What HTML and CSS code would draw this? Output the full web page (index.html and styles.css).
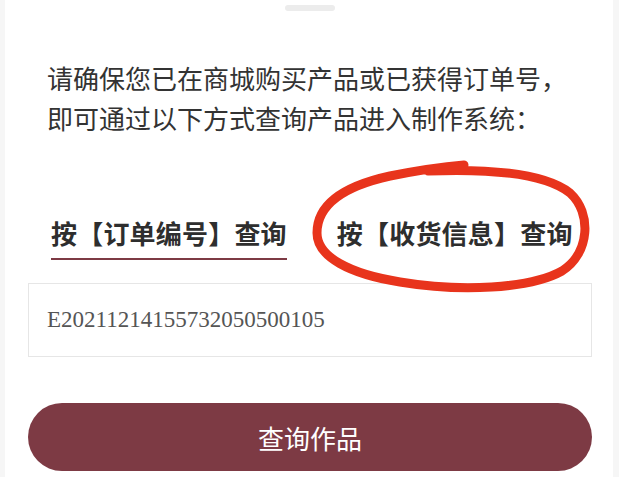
FILE: index.html
```html
<!DOCTYPE html>
<html lang="zh-CN">
<head>
  <meta charset="UTF-8" />
  <title>查询作品</title>
  <link rel="stylesheet" href="styles.css">
</head>
<body>

<div class="sheet">
  <div class="handle"></div>

  <p class="intro">请确保您已在商城购买产品或已获得订单号，<br>即可通过以下方式查询产品进入制作系统：</p>

  <div class="tabs">
    <div class="tab active">按【订单编号】查询</div>
    <div class="tab">按【收货信息】查询</div>
    <!-- red hand-drawn mark over the second tab -->
    <svg class="mark" width="284" height="136" viewBox="0 0 284 136">
      <path d="M118,12 C170,10 232,12 260,34 C282,54 280,94 252,112 C220,130 150,133 90,123 C40,115 7,98 7,74 C7,48 30,28 80,17 C105,12 130,8 154,6"
            fill="none" stroke="#e8341c" stroke-width="9" stroke-linecap="round"/>
    </svg>
  </div>

  <input type="text" class="order-input" value="E20211214155732050500105">

  <button class="btn">查询作品</button>
</div>

</body>
</html>
```

FILE: styles.css
```css
html, body {
  margin: 0;
  background: #fff;
}
body {
  font-family: "Noto Sans CJK SC", "Noto Sans", sans-serif;
  color: #333;
}
.sheet {
  height: 477px;
  box-sizing: border-box;
  padding: 5px 21px 0 23px;
  background: #fff;
  border-left: 5px solid #f6f6f6;
  border-right: 6px solid #f6f6f6;
}
.handle {
  width: 50px;
  height: 6px;
  margin: 0 auto;
  border-radius: 3px;
  background: #ececec;
}
.intro {
  margin: 47px 0 0 19px;
  font-size: 26px;
  line-height: 40px;
  color: #333;
}
.tabs {
  position: relative;
  display: flex;
  gap: 50px;
  margin-top: 77px;
  padding-left: 23px;
}
.tab {
  font-size: 26px;
  font-weight: bold;
  line-height: 36px;
  letter-spacing: 0.2px;
  padding-bottom: 7px;
  color: #2e2e2e;
  border-bottom: 2px solid transparent;
}
.tab.active {
  border-bottom-color: #7d3a44;
}
.mark {
  position: absolute;
  left: 282px;
  top: -56px;
}
.order-input {
  display: block;
  box-sizing: border-box;
  width: 100%;
  height: 74px;
  margin-top: 23px;
  padding: 0 18px;
  border: 1px solid #e6e6e6;
  font-family: "Liberation Serif", serif;
  font-size: 23px;
  color: #555;
  background: #fff;
  outline: none;
}
.btn {
  display: block;
  width: 100%;
  height: 68px;
  margin-top: 46px;
  border: none;
  border-radius: 34px;
  background: #7d3a44;
  color: #fff;
  font-family: "Noto Sans CJK SC", sans-serif;
  font-size: 26px;
  cursor: pointer;
}
```
